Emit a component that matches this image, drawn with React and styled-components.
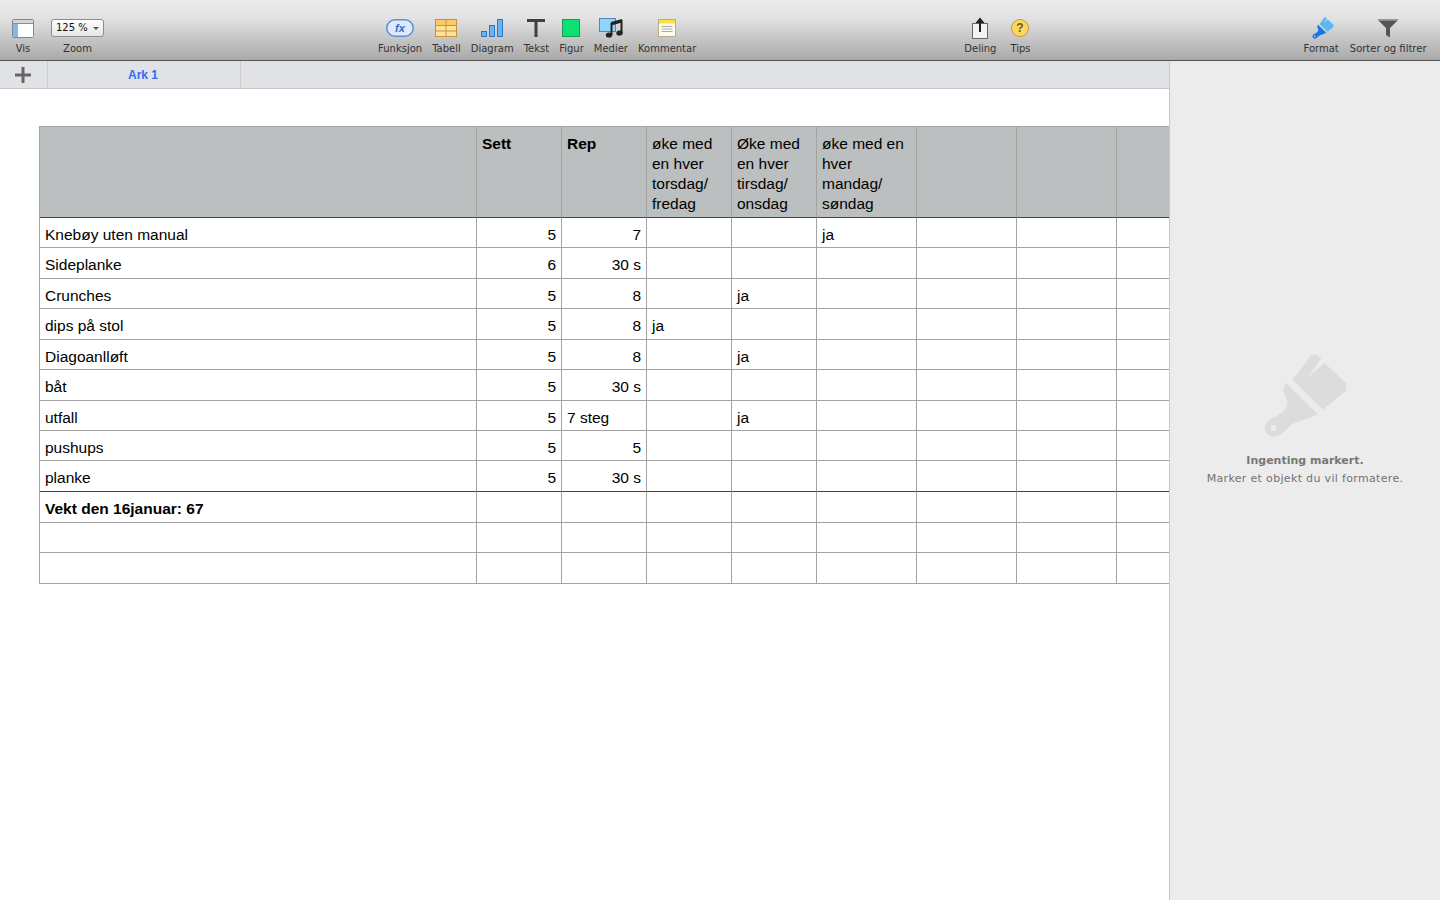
import React from "react";
import styled, { createGlobalStyle } from "styled-components";

const GlobalStyle = createGlobalStyle`
  html, body { margin: 0; padding: 0; height: 100%; background: #fff; overflow: hidden; }
  #root { height: 100%; }
`;

const Page = styled.div`
  width: 1440px;
  height: 900px;
  display: flex;
  flex-direction: column;
  overflow: hidden;
`;

const Toolbar = styled.header`
  height: 60px;
  flex: none;
  box-sizing: content-box;
  display: flex;
  align-items: flex-start;
  padding: 0 12px;
  background: linear-gradient(#ececec 0%, #e2e2e2 30%, #c8c8c8 62%, #a9a9a9 100%);
  border-bottom: 1px solid #555;
`;

const Group = styled.div`
  display: flex;
  gap: ${(p) => p.$gap || 10}px;
  margin-left: ${(p) => p.$left || 0}px;
`;

const Tool = styled.div`
  display: flex;
  flex-direction: column;
  align-items: center;
  height: 60px;
`;

const IconSlot = styled.div`
  height: 26px;
  margin-top: 15px;
  padding-left: ${(p) => p.$nudge || 0}px;
  display: flex;
  align-items: center;
  justify-content: center;
`;

const ToolLabel = styled.span`
  font: 10px/12px "DejaVu Sans", sans-serif;
  color: #333;
  margin-top: 2px;
  white-space: nowrap;
`;

const ZoomSelect = styled.div`
  width: 53px;
  height: 18px;
  box-sizing: border-box;
  border: 1px solid #8c8c8c;
  border-radius: 3px;
  background: linear-gradient(#fff, #e6e6e6);
  display: flex;
  align-items: center;
  padding-left: 4px;
  gap: 5px;
  font: 10px/1 "DejaVu Sans", sans-serif;
  color: #111;
`;

const Caret = styled.i`
  width: 0;
  height: 0;
  border-left: 3px solid transparent;
  border-right: 3px solid transparent;
  border-top: 3px solid #555;
`;

const Main = styled.div`
  flex: 1;
  display: flex;
  min-height: 0;
`;

const Workspace = styled.main`
  width: 1169px;
  flex: none;
  display: flex;
  flex-direction: column;
  min-height: 0;
`;

const TabBar = styled.nav`
  height: 27px;
  flex: none;
  display: flex;
  background: #e1e2e5;
  border-bottom: 1px solid #c4c4c4;
`;

const AddSheet = styled.div`
  width: 48px;
  box-sizing: border-box;
  border-right: 1px solid #cbcbcb;
  padding-right: 2px;
  display: flex;
  align-items: center;
  justify-content: center;
`;

const SheetTab = styled.div`
  width: 193px;
  box-sizing: border-box;
  border-right: 1px solid #cbcbcb;
  padding-right: 2px;
  display: flex;
  align-items: center;
  justify-content: center;
  font: bold 12px "Liberation Sans", Arial, sans-serif;
  color: #2f6ef5;
`;

const Sheet = styled.div`
  flex: 1;
  padding: 37px 0 0 39px;
  background: #fff;
  overflow: hidden;
`;

const Table = styled.table`
  table-layout: fixed;
  width: 1190px;
  border-collapse: separate;
  border-spacing: 0;
  border-top: 1px solid #a3a3a3;
  border-left: 1px solid #a3a3a3;
  font: 15.5px/20px "Liberation Sans", Arial, sans-serif;
  color: #000;
`;

const Cell = styled.td`
  box-sizing: border-box;
  height: ${(p) => p.$h}px;
  padding: 7px 5px 0 5px;
  border-right: 1px solid #a3a3a3;
  border-bottom: 1px solid ${(p) => (p.$dark ? "#444" : "#a3a3a3")};
  text-align: ${(p) => (p.$right ? "right" : "left")};
  font-weight: ${(p) => (p.$bold ? "bold" : "normal")};
  vertical-align: top;
  white-space: nowrap;
`;

const HeadCell = styled.th`
  box-sizing: border-box;
  height: 91px;
  padding: 7px 5px 0 5px;
  border-right: 1px solid #a3a3a3;
  border-bottom: 1px solid #444;
  background: #bbbfbf;
  text-align: left;
  vertical-align: top;
  font-weight: ${(p) => (p.$bold ? "bold" : "normal")};
`;

const Inspector = styled.aside`
  flex: 1;
  box-sizing: border-box;
  border-left: 1px solid #c8c8c8;
  background: #ececec;
  display: flex;
  flex-direction: column;
  align-items: center;
  padding-top: 292px;
`;

const EmptyTitle = styled.div`
  margin-top: 16px;
  font: bold 11px/14px "DejaVu Sans", sans-serif;
  color: #777;
`;

const EmptyText = styled.div`
  margin-top: 4px;
  font: 11px/14px "DejaVu Sans", sans-serif;
  letter-spacing: 0.33px;
  color: #727272;
  white-space: nowrap;
`;

const Brush = ({ size, head, handle, hole }) => (
  <svg width={size} height={size} viewBox="220 38 255 255">
    <path d="M378 42 L395 55 L355 110 L405 68 L470 130 L470 150 L400 208 L308 118 L365 45 Z" fill={head} />
    <path d="M290 128 L385 222 L340 240 C315 245 300 255 285 272 C270 290 245 295 232 280 C218 265 228 245 245 235 C270 225 295 205 293 185 C290 165 270 150 290 128 Z" fill={handle} />
    <circle cx="252" cy="262" r="9" fill={hole} />
  </svg>
);

const VisIcon = () => (
  <svg width="22" height="19" viewBox="0 0 22 19">
    <rect x="0.5" y="0.5" width="21" height="18" rx="1" fill="#fff" stroke="#7d8795" />
    <rect x="1" y="1" width="20" height="3" fill="#d6d6d6" />
    <rect x="1" y="4.5" width="5" height="13.5" fill="#8fb4ea" />
    <path d="M0.5 4.5 H21.5" stroke="#8a8f99" />
  </svg>
);

const FxIcon = () => (
  <svg width="28" height="18" viewBox="0 0 28 18">
    <rect x="0.75" y="0.75" width="26.5" height="16.5" rx="8.25" fill="#dde9fa" stroke="#5d8fd6" strokeWidth="1.5" />
    <text x="14" y="13" textAnchor="middle" fontFamily="Liberation Sans, sans-serif" fontStyle="italic" fontWeight="bold" fontSize="11" fill="#2f6cc4">fx</text>
  </svg>
);

const TableIcon = () => (
  <svg width="22" height="18" viewBox="0 0 22 18">
    <rect x="0.5" y="0.5" width="21" height="17" fill="#ffe39a" stroke="#c9913a" />
    <rect x="1" y="1" width="20" height="5" fill="#fccb66" />
    <path d="M0.5 6.5 H21.5 M0.5 12 H21.5 M11 0.5 V17.5" stroke="#c9913a" />
  </svg>
);

const ChartIcon = () => (
  <svg width="22" height="18" viewBox="0 0 22 18">
    <rect x="0.5" y="12.5" width="5" height="5" fill="#68b5f3" stroke="#2e75c8" />
    <rect x="8.5" y="6.5" width="5" height="11" fill="#68b5f3" stroke="#2e75c8" />
    <rect x="16.5" y="0.5" width="5" height="17" fill="#68b5f3" stroke="#2e75c8" />
  </svg>
);

const TextIcon = () => (
  <svg width="18" height="18" viewBox="0 0 18 18">
    <path d="M0 0 H18 V3 H10.5 V18 H7.5 V3 H0 Z" fill="#3f3f3f" />
  </svg>
);

const ShapeIcon = () => (
  <svg width="18" height="18" viewBox="0 0 18 18">
    <rect x="0.5" y="0.5" width="17" height="17" fill="#0de070" stroke="#1b9a58" />
  </svg>
);

const MediaIcon = () => (
  <svg width="24" height="20" viewBox="0 0 24 20">
    <rect x="0.5" y="0.5" width="16" height="13" fill="#8fd4fb" stroke="#4f86c6" />
    <path d="M12 4 L23 1 V4.5 L12 7.5 Z" fill="#222" />
    <path d="M12.5 5 V17 M22.5 2 V15" stroke="#222" strokeWidth="2" />
    <ellipse cx="10" cy="17" rx="3.2" ry="2.6" fill="#222" />
    <ellipse cx="20.5" cy="15" rx="3.2" ry="2.6" fill="#222" />
  </svg>
);

const NoteIcon = () => (
  <svg width="18" height="18" viewBox="0 0 18 18">
    <rect x="0.5" y="0.5" width="17" height="17" fill="#fdfcf2" stroke="#b5ad8a" />
    <rect x="1" y="1" width="16" height="3.5" fill="#ffdf3d" />
    <path d="M3.5 7.5 H14.5 M3.5 10 H14.5 M3.5 12.5 H14.5" stroke="#a9a9a9" />
  </svg>
);

const ShareIcon = () => (
  <svg width="16" height="22" viewBox="0 0 16 22">
    <rect x="0.5" y="6.5" width="15" height="15" fill="#f3f3f3" stroke="#666" />
    <path d="M8 15 V2" stroke="#222" strokeWidth="2" />
    <path d="M3.5 6 L8 0.5 L12.5 6 Z" fill="#222" />
  </svg>
);

const TipsIcon = () => (
  <svg width="18" height="18" viewBox="0 0 18 18">
    <circle cx="9" cy="9" r="8.5" fill="#fbd75e" stroke="#c79a3a" />
    <text x="9" y="13" textAnchor="middle" fontFamily="Liberation Sans, sans-serif" fontWeight="bold" fontSize="12" fill="#6b5a20">?</text>
  </svg>
);

const FilterIcon = () => (
  <svg width="22" height="19" viewBox="0 0 22 19">
    <path d="M0.5 0.5 H21.5 L13 9 V18.5 L9 16 V9 Z" fill="#555" />
    <path d="M2 1.5 H20" stroke="#8a8a8a" />
  </svg>
);

const PlusIcon = () => (
  <svg width="16" height="16" viewBox="0 0 16 16">
    <path d="M0 6.5 H16 V9.5 H0 Z M6.5 0 H9.5 V16 H6.5 Z" fill="#666" />
  </svg>
);

const centerTools = [
  { label: "Funksjon", icon: <FxIcon /> },
  { label: "Tabell", icon: <TableIcon /> },
  { label: "Diagram", icon: <ChartIcon /> },
  { label: "Tekst", icon: <TextIcon /> },
  { label: "Figur", icon: <ShapeIcon /> },
  { label: "Medier", icon: <MediaIcon /> },
  { label: "Kommentar", icon: <NoteIcon /> },
];

const columns = [437, 85, 85, 85, 85, 100, 100, 100, 128];

const headers = [
  { text: "" },
  { text: "Sett", bold: true },
  { text: "Rep", bold: true },
  { text: "øke med en hver torsdag/ fredag" },
  { text: "Øke med en hver tirsdag/ onsdag" },
  { text: "øke med en hver mandag/ søndag" },
  { text: "" },
  { text: "" },
  { text: "" },
];

// name, sett, rep, torsdag, tirsdag, mandag, row height
const rows = [
  ["Knebøy uten manual", "5", "7", "", "", "ja", 30],
  ["Sideplanke", "6", "30 s", "", "", "", 31],
  ["Crunches", "5", "8", "", "ja", "", 30],
  ["dips på stol", "5", "8", "ja", "", "", 31],
  ["Diagoanlløft", "5", "8", "", "ja", "", 30],
  ["båt", "5", "30 s", "", "", "", 31],
  ["utfall", "5", "7 steg", "", "ja", "", 30],
  ["pushups", "5", "5", "", "", "", 30],
  ["planke", "5", "30 s", "", "", "", 31],
  ["Vekt den 16januar: 67", "", "", "", "", "", 31],
  ["", "", "", "", "", "", 30],
  ["", "", "", "", "", "", 31],
];

export default function App() {
  return (
    <Page>
      <GlobalStyle />
      <Toolbar>
        <Group $gap={17}>
          <Tool>
            <IconSlot><VisIcon /></IconSlot>
            <ToolLabel>Vis</ToolLabel>
          </Tool>
          <Tool>
            <IconSlot>
              <ZoomSelect>125 %<Caret /></ZoomSelect>
            </IconSlot>
            <ToolLabel>Zoom</ToolLabel>
          </Tool>
        </Group>
        <Group $left={274}>
          {centerTools.map((t) => (
            <Tool key={t.label}>
              <IconSlot>{t.icon}</IconSlot>
              <ToolLabel>{t.label}</ToolLabel>
            </Tool>
          ))}
        </Group>
        <Group $left={268} $gap={14}>
          <Tool>
            <IconSlot><ShareIcon /></IconSlot>
            <ToolLabel>Deling</ToolLabel>
          </Tool>
          <Tool>
            <IconSlot><TipsIcon /></IconSlot>
            <ToolLabel>Tips</ToolLabel>
          </Tool>
        </Group>
        <Group $left={273} $gap={11}>
          <Tool>
            <IconSlot $nudge={4}>
              <Brush size={22} head="#5ab7f4" handle="#1577e2" hole="#cfe6fb" />
            </IconSlot>
            <ToolLabel>Format</ToolLabel>
          </Tool>
          <Tool>
            <IconSlot><FilterIcon /></IconSlot>
            <ToolLabel>Sorter og filtrer</ToolLabel>
          </Tool>
        </Group>
      </Toolbar>
      <Main>
        <Workspace>
          <TabBar>
            <AddSheet><PlusIcon /></AddSheet>
            <SheetTab>Ark 1</SheetTab>
          </TabBar>
          <Sheet>
            <Table>
              <colgroup>
                {columns.map((w, i) => <col key={i} width={w} />)}
              </colgroup>
              <thead>
                <tr>
                  {headers.map((h, i) => (
                    <HeadCell key={i} $bold={h.bold}>{h.text}</HeadCell>
                  ))}
                </tr>
              </thead>
              <tbody>
                {rows.map((r, i) => (
                  <tr key={i}>
                    <Cell $h={r[6]} $dark={i === 8} $bold={i === 9}>{r[0]}</Cell>
                    <Cell $h={r[6]} $dark={i === 8} $right>{r[1]}</Cell>
                    <Cell $h={r[6]} $dark={i === 8} $right={r[2] !== "7 steg"}>{r[2]}</Cell>
                    <Cell $h={r[6]} $dark={i === 8}>{r[3]}</Cell>
                    <Cell $h={r[6]} $dark={i === 8}>{r[4]}</Cell>
                    <Cell $h={r[6]} $dark={i === 8}>{r[5]}</Cell>
                    <Cell $h={r[6]} $dark={i === 8} />
                    <Cell $h={r[6]} $dark={i === 8} />
                    <Cell $h={r[6]} $dark={i === 8} />
                  </tr>
                ))}
              </tbody>
            </Table>
          </Sheet>
        </Workspace>
        <Inspector>
          <Brush size={85} head="#dcdcdc" handle="#dcdcdc" hole="#ececec" />
          <EmptyTitle>Ingenting markert.</EmptyTitle>
          <EmptyText>Marker et objekt du vil formatere.</EmptyText>
        </Inspector>
      </Main>
    </Page>
  );
}
